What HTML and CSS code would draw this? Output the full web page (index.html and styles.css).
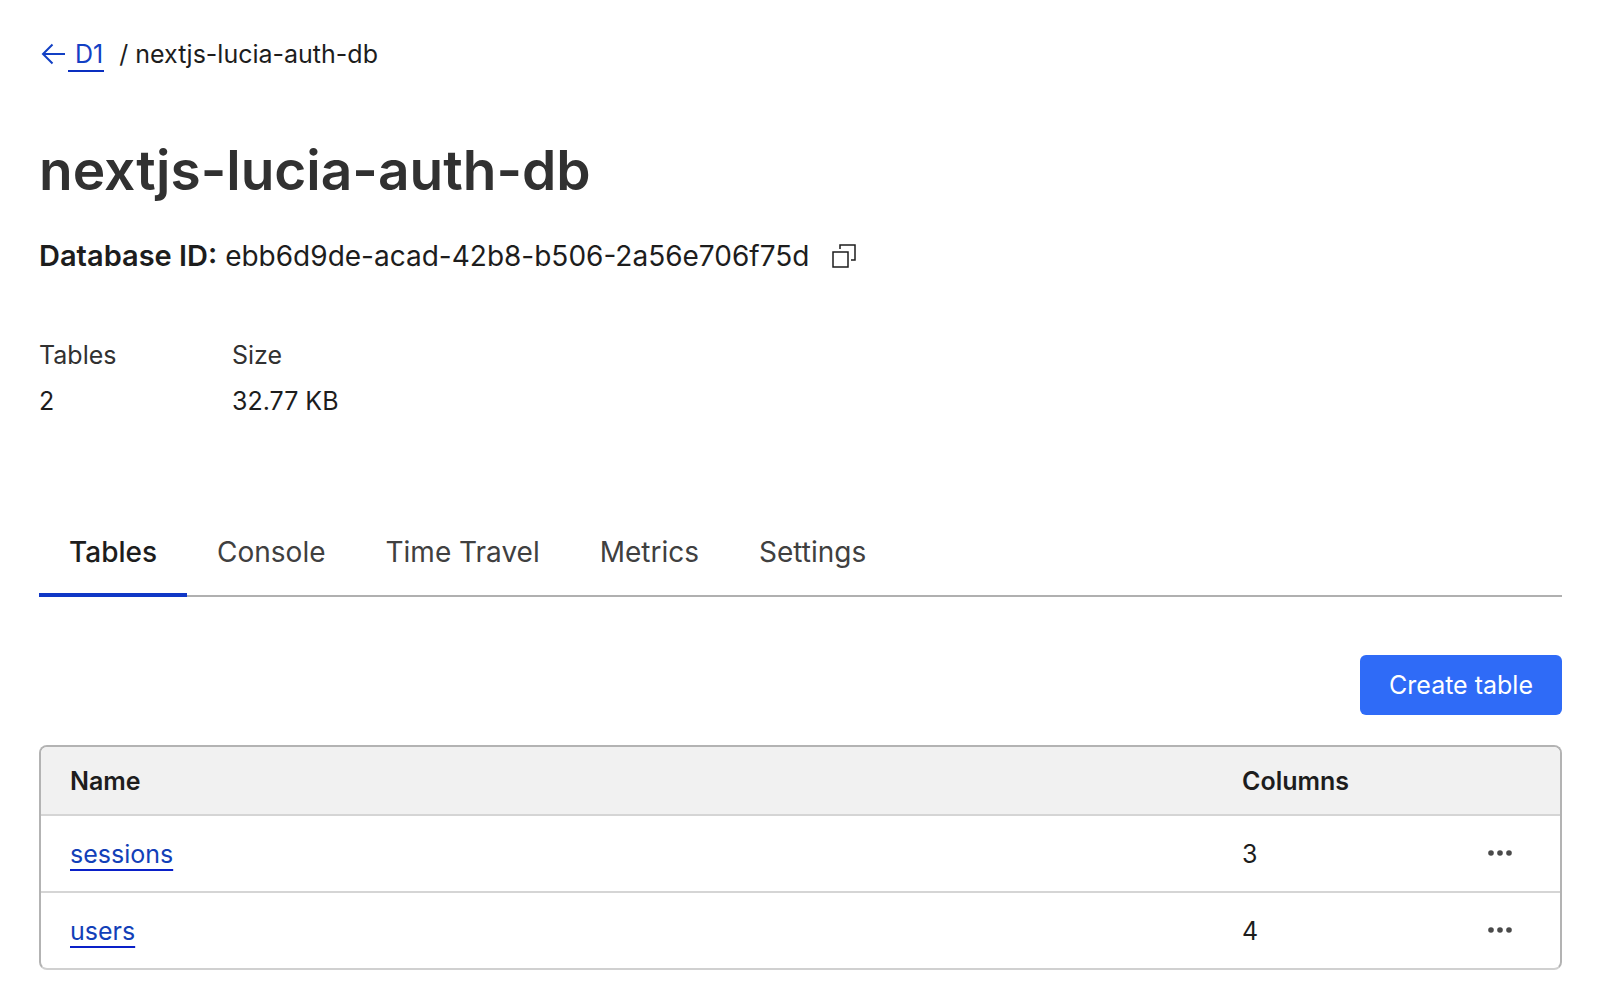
FILE: index.html
```html
<!DOCTYPE html>
<html lang="en">
<head>
<meta charset="utf-8">
<meta name="viewport" content="width=device-width, initial-scale=1">
<title>nextjs-lucia-auth-db</title>
<link rel="stylesheet" href="styles.css">
</head>
<body>
<main class="page">
  <nav class="breadcrumb" aria-label="Breadcrumb">
    <a class="back" href="#">
      <svg class="back-icon" width="26" height="32" viewBox="0 0 26 32" fill="none" stroke="currentColor" stroke-width="2" aria-hidden="true"><path d="M26 16H4M13.500 6.500 4 16l9.500 9.500"/></svg>
      <span class="back-label">D1</span>
    </a>
    <span class="separator">/</span>
    <span>nextjs-lucia-auth-db</span>
  </nav>

  <h1 class="title">nextjs-lucia-auth-db</h1>

  <div class="database-id">
    <span><strong>Database ID:</strong> ebb6d9de-acad-42b8-b506-2a56e706f75d</span>
    <button class="icon-button" type="button" aria-label="Copy database ID">
      <svg width="26" height="26" viewBox="0 0 26 26" fill="none" stroke="currentColor" stroke-width="1.500" aria-hidden="true"><path d="M2 9h15v15H2zM9 6V2h15v15h-4"/></svg>
    </button>
  </div>

  <dl class="stats">
    <div class="stat"><dt>Tables</dt><dd>2</dd></div>
    <div class="stat"><dt>Size</dt><dd>32.77 KB</dd></div>
  </dl>

  <nav class="tabs" aria-label="Database sections">
    <a class="tab tab-active" href="#" aria-current="page">Tables</a>
    <a class="tab" href="#">Console</a>
    <a class="tab" href="#">Time Travel</a>
    <a class="tab" href="#">Metrics</a>
    <a class="tab" href="#">Settings</a>
  </nav>

  <div class="actions">
    <button class="create" type="button">Create table</button>
  </div>

  <div class="table-frame">
    <table class="table">
      <thead>
        <tr><th class="name" scope="col">Name</th><th class="columns" scope="col">Columns</th><th class="menu"></th></tr>
      </thead>
      <tbody>
        <tr>
          <td><a class="link" href="#">sessions</a></td>
          <td>3</td>
          <td class="menu"><button class="icon-button" type="button" aria-label="Actions for sessions"><svg width="26" height="26" viewBox="0 0 26 26" fill="currentColor" aria-hidden="true"><circle cx="4" cy="13" r="2.800"/><circle cx="13" cy="13" r="2.800"/><circle cx="22" cy="13" r="2.800"/></svg></button></td>
        </tr>
        <tr>
          <td><a class="link" href="#">users</a></td>
          <td>4</td>
          <td class="menu"><button class="icon-button" type="button" aria-label="Actions for users"><svg width="26" height="26" viewBox="0 0 26 26" fill="currentColor" aria-hidden="true"><circle cx="4" cy="13" r="2.800"/><circle cx="13" cy="13" r="2.800"/><circle cx="22" cy="13" r="2.800"/></svg></button></td>
        </tr>
      </tbody>
    </table>
  </div>
</main>
</body>
</html>
```
FILE: styles.css
```css
* {
  box-sizing: border-box;
}

body {
  margin: 0;
  background: #fff;
  color: #1d1d1d;
  font: 400 25px/32px Inter, "Liberation Sans", sans-serif;
}

button {
  font: inherit;
}

.page {
  padding: 38px 38px 24px 39px;
}

.breadcrumb {
  display: flex;
  align-items: flex-start;
}

.back {
  display: flex;
  color: #1240c4;
  text-decoration: none;
}

.back-icon {
  margin-right: 3px;
}

.back-label {
  padding: 0 1px 0 7px;
  border-bottom: 2px solid #0a2fc0;
}

.separator {
  margin: 0 7px 0 15px;
}

.title {
  margin: 66px 0 36px;
  color: #313131;
  font-size: 55px;
  font-weight: 600;
  line-height: 64px;
}

.database-id {
  display: flex;
  align-items: center;
  gap: 22px;
  font-size: 28px;
  line-height: 36px;
}

.database-id strong {
  font-size: 29px;
  font-weight: 600;
}

.icon-button {
  display: flex;
  padding: 0;
  border: 0;
  background: none;
  color: inherit;
  cursor: pointer;
}

.stats {
  display: flex;
  margin: 65px 0 0;
}

.stat {
  display: grid;
  gap: 14px;
  min-width: 193px;
}

.stat dt {
  color: #313131;
}

.stat dd {
  margin: 0;
}

.tabs {
  display: flex;
  margin-top: 93px;
  box-shadow: inset 0 -2px #b0b0b0;
}

.tab {
  padding: 24px 30px 23px;
  border-bottom: 4px solid transparent;
  color: #404040;
  font-size: 28px;
  line-height: 36px;
  text-decoration: none;
}

.tab-active {
  border-color: #1037c6;
  color: #1d1d1d;
  font-weight: 500;
}

.actions {
  display: flex;
  justify-content: flex-end;
  margin: 58px 0 30px;
}

.create {
  padding: 14px 29px;
  border: 0;
  border-radius: 6px;
  background: #2f6bf7;
  color: #fff;
  cursor: pointer;
}

.table-frame {
  overflow: hidden;
  border: 2px solid #b3b3b3;
  border-bottom-color: #d0d0d0;
  border-radius: 8px;
}

.table {
  width: 100%;
  border-collapse: separate;
  border-spacing: 0;
  table-layout: fixed;
}

.table th,
.table td {
  padding: 22px 0 21px 29px;
  text-align: left;
}

.table th {
  padding: 18px 0 17px 29px;
  background: #f1f1f1;
  font-weight: 600;
}

.table td {
  border-top: 2px solid #d5d5d5;
}

.table .columns {
  width: 216px;
}

.table .menu {
  width: 131px;
  padding-left: 58px;
  color: #4a4a4a;
}

.table td.menu {
  padding-top: 24px;
  vertical-align: top;
}

.link {
  color: #1240b8;
  text-decoration: underline 2px #0a20c8;
  text-underline-offset: 6px;
  text-decoration-skip-ink: none;
}
```
